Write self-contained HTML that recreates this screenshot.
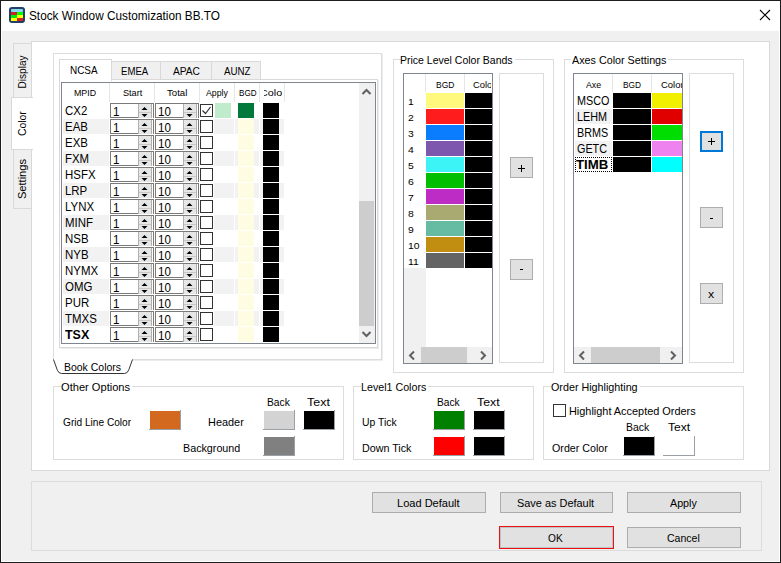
<!DOCTYPE html><html><head><meta charset="utf-8"><style>
html,body{margin:0;padding:0;}
body{width:781px;height:563px;position:relative;overflow:hidden;background:#f0f0f0;font-family:"Liberation Sans",sans-serif;}
.a{position:absolute;box-sizing:border-box;}
.t{position:absolute;white-space:nowrap;}
</style></head><body>
<div class="a" style="left:0px;top:0px;width:781px;height:563px;border:1px solid #1c1c1c;background:#f0f0f0;"></div>
<div class="a" style="left:1px;top:1px;width:779px;height:561px;border:1px solid #ffffff;"></div>
<div class="a" style="left:1px;top:1px;width:779px;height:30px;background:#ffffff;"></div>
<svg class="a" style="left:9px;top:7px" width="16" height="16" viewBox="0 0 16 16">
<rect x="0" y="0" width="16" height="16" rx="3" fill="#213f68"/>
<rect x="2" y="2" width="12" height="3" rx="1" fill="#8ad6ee"/>
<rect x="2" y="5" width="6" height="3" fill="#d42020"/><rect x="8" y="5" width="6" height="3" fill="#00ff00"/>
<rect x="2" y="8" width="6" height="3" fill="#00ee00"/><rect x="8" y="8" width="6" height="3" fill="#ffff00"/>
<rect x="2" y="11" width="6" height="3" fill="#ffff00"/><rect x="8" y="11" width="6" height="3" fill="#d42020"/>
</svg>
<div class="t" style="left:29.47px;top:10.13px;font-size:12.6px;line-height:12.6px;color:#000;font-weight:400;transform:scaleX(0.9357);transform-origin:0 0;">Stock Window Customization BB.TO</div>
<svg class="a" style="left:759px;top:9px" width="12" height="12" viewBox="0 0 12 12">
<path d="M1 1L11 11M11 1L1 11" stroke="#000" stroke-width="1.1" fill="none"/></svg>
<div class="a" style="left:13px;top:43px;width:19px;height:55px;border:1px solid #d9d9d9;background:#f0f0f0;"></div>
<div class="a" style="left:13px;top:149px;width:19px;height:60px;border:1px solid #d9d9d9;background:#f0f0f0;"></div>
<div class="a" style="left:31px;top:41px;width:739px;height:430px;border:1px solid #d9d9d9;background:#ffffff;"></div>
<div class="a" style="left:11px;top:97px;width:22px;height:53px;border:1px solid #d9d9d9;background:#ffffff;border-right:none;"></div>
<div class="t" style="left:0px;top:0px;font-size:11px;line-height:11px;transform-origin:0 0;transform:translate(18.60px,88.41px) rotate(-90deg) scaleX(0.9148) translateY(-1.34px);">Display</div>
<div class="t" style="left:0px;top:0px;font-size:11px;line-height:11px;transform-origin:0 0;transform:translate(18.40px,136.12px) rotate(-90deg) scaleX(0.9483) translateY(-1.34px);">Color</div>
<div class="t" style="left:0px;top:0px;font-size:11px;line-height:11px;transform-origin:0 0;transform:translate(18.40px,199.10px) rotate(-90deg) scaleX(1.0081) translateY(-1.34px);">Settings</div>
<div class="a" style="left:53px;top:53px;width:329px;height:307px;border:1px solid #dcdcdc;"></div>
<div class="a" style="left:382px;top:54px;width:1px;height:307px;background:#ededed;"></div>
<div class="a" style="left:133px;top:360px;width:250px;height:1px;background:#ededed;"></div>
<div class="a" style="left:54px;top:355px;width:78px;height:5px;background:#ffffff;"></div>
<svg class="a" style="left:50px;top:355px" width="90" height="22" viewBox="0 0 90 22">
<path d="M3.5 4.5 L7.2 14.8 Q8.5 18.5 11.5 18.5 L74.5 18.5 Q77.5 18.5 78.8 14.8 L82.5 4.5" fill="#ffffff" stroke="#333" stroke-width="1"/>
</svg>
<div class="t" style="left:63.66px;top:362.36px;font-size:10.8px;line-height:10.8px;color:#000;font-weight:400;transform:scaleX(0.9694);transform-origin:0 0;">Book Colors</div>
<div class="a" style="left:111px;top:61px;width:50px;height:19px;border:1px solid #d9d9d9;background:#f0f0f0;"></div>
<div class="a" style="left:160px;top:61px;width:52px;height:19px;border:1px solid #d9d9d9;background:#f0f0f0;"></div>
<div class="a" style="left:211px;top:61px;width:50px;height:19px;border:1px solid #d9d9d9;background:#f0f0f0;"></div>
<div class="a" style="left:59px;top:79px;width:319px;height:269px;border:1px solid #d9d9d9;background:#ffffff;"></div>
<div class="a" style="left:378px;top:80px;width:1px;height:269px;background:#ededed;"></div>
<div class="a" style="left:60px;top:348px;width:319px;height:1px;background:#ededed;"></div>
<div class="a" style="left:59px;top:59px;width:53px;height:22px;border:1px solid #d9d9d9;background:#ffffff;border-bottom:none;"></div>
<div class="t" style="left:69.60px;top:65.42px;font-size:11.2px;line-height:11.2px;color:#000;font-weight:400;transform:scaleX(0.8879);transform-origin:0 0;">NCSA</div>
<div class="t" style="left:120.83px;top:65.52px;font-size:11.2px;line-height:11.2px;color:#000;font-weight:400;transform:scaleX(0.8571);transform-origin:0 0;">EMEA</div>
<div class="t" style="left:172.70px;top:65.52px;font-size:11.2px;line-height:11.2px;color:#000;font-weight:400;transform:scaleX(0.9100);transform-origin:0 0;">APAC</div>
<div class="t" style="left:223.80px;top:65.52px;font-size:11.2px;line-height:11.2px;color:#000;font-weight:400;transform:scaleX(0.8696);transform-origin:0 0;">AUNZ</div>
<div class="a" style="left:61px;top:82px;width:315px;height:262px;border:1px solid #7f8690;background:#ffffff;"></div>
<div class="a" style="left:109px;top:83px;width:1px;height:19px;background:#e6e6e6;"></div>
<div class="a" style="left:154px;top:83px;width:1px;height:19px;background:#e6e6e6;"></div>
<div class="a" style="left:199px;top:83px;width:1px;height:19px;background:#e6e6e6;"></div>
<div class="a" style="left:234px;top:83px;width:1px;height:19px;background:#e6e6e6;"></div>
<div class="a" style="left:259px;top:83px;width:1px;height:19px;background:#e6e6e6;"></div>
<div class="a" style="left:284px;top:83px;width:1px;height:19px;background:#e6e6e6;"></div>
<div class="t" style="left:74.29px;top:89.38px;font-size:9px;line-height:9px;color:#000;font-weight:400;transform:scaleX(0.9825);transform-origin:0 0;">MPID</div>
<div class="t" style="left:122.59px;top:89.38px;font-size:9px;line-height:9px;color:#000;font-weight:400;transform:scaleX(1.0140);transform-origin:0 0;">Start</div>
<div class="t" style="left:167.21px;top:89.38px;font-size:9px;line-height:9px;color:#000;font-weight:400;transform:scaleX(1.0700);transform-origin:0 0;">Total</div>
<div class="t" style="left:206.30px;top:89.38px;font-size:9px;line-height:9px;color:#000;font-weight:400;transform:scaleX(0.9733);transform-origin:0 0;">Apply</div>
<div class="t" style="left:238.55px;top:89.38px;font-size:9px;line-height:9px;color:#000;font-weight:400;transform:scaleX(0.8987);transform-origin:0 0;">BGD</div>
<div class="a" style="left:264px;top:84px;width:18px;height:17px;overflow:hidden;"><div class="t" style="left:-4.04px;top:5.38px;font-size:9px;line-height:9px;color:#000;font-weight:400;transform:scaleX(1.1973);transform-origin:0 0;">Color</div></div>
<div class="a" style="left:62px;top:84px;width:297px;height:259px;overflow:hidden;"><div class="a" style="left:-62px;top:-84px;width:781px;height:563px;"><div class="t" style="left:65.43px;top:105.13px;font-size:12.6px;line-height:12.6px;color:#000;font-weight:400;transform:scaleX(0.9083);transform-origin:0 0;">CX2</div><div class="a" style="left:110px;top:103px;width:44px;height:15px;border:1px solid #7a7a7a;background:#ffffff;border-bottom:none;"></div><div class="a" style="left:110px;top:117px;width:28px;height:1px;background:#7a7a7a;"></div><div class="a" style="left:138px;top:104px;width:14px;height:14px;background:#e6e6e6;"></div><div class="a" style="left:138px;top:104px;width:1px;height:14px;background:#b0b0b0;"></div><div class="a" style="left:151px;top:104px;width:1px;height:14px;background:#b0b0b0;"></div><div class="a" style="left:139px;top:112px;width:12px;height:1px;background:#c8c8c8;"></div><svg class="a" style="left:139px;top:104px" width="12" height="14" viewBox="0 0 12 14"><path d="M2.5 6L5.5 3L8.5 6Z M2.5 10L5.5 13L8.5 10Z" fill="#000"/></svg><div class="t" style="left:113.13px;top:105.70px;font-size:12.4px;line-height:12.4px;color:#000;font-weight:400;transform:scaleX(0.9355);transform-origin:0 0;">1</div><div class="a" style="left:155px;top:103px;width:44px;height:15px;border:1px solid #7a7a7a;background:#ffffff;border-bottom:none;"></div><div class="a" style="left:155px;top:117px;width:28px;height:1px;background:#7a7a7a;"></div><div class="a" style="left:183px;top:104px;width:14px;height:14px;background:#e6e6e6;"></div><div class="a" style="left:183px;top:104px;width:1px;height:14px;background:#b0b0b0;"></div><div class="a" style="left:196px;top:104px;width:1px;height:14px;background:#b0b0b0;"></div><div class="a" style="left:184px;top:112px;width:12px;height:1px;background:#c8c8c8;"></div><svg class="a" style="left:184px;top:104px" width="12" height="14" viewBox="0 0 12 14"><path d="M2.5 6L5.5 3L8.5 6Z M2.5 10L5.5 13L8.5 10Z" fill="#000"/></svg><div class="t" style="left:158.13px;top:105.70px;font-size:12.4px;line-height:12.4px;color:#000;font-weight:400;transform:scaleX(0.9355);transform-origin:0 0;">10</div><div class="a" style="left:200px;top:104px;width:13px;height:13px;border:1px solid #333333;background:#ffffff;"></div><svg class="a" style="left:201px;top:105px" width="11" height="11" viewBox="0 0 11 11"><path d="M1.5 5.5L4.5 8.5L9.5 2" stroke="#333" stroke-width="1.2" fill="none"/></svg><div class="a" style="left:215px;top:103px;width:16px;height:15px;background:#c1ebcd;"></div><div class="a" style="left:238px;top:103px;width:16px;height:15px;background:#007a3b;"></div><div class="a" style="left:263px;top:103px;width:16px;height:15px;background:#000000;"></div><div class="a" style="left:63px;top:119px;width:46px;height:15px;background:#f2f2f2;"></div><div class="a" style="left:214px;top:119px;width:20px;height:15px;background:#f2f2f2;"></div><div class="a" style="left:235px;top:119px;width:24px;height:15px;background:#f2f2f2;"></div><div class="a" style="left:260px;top:119px;width:24px;height:15px;background:#f2f2f2;"></div><div class="t" style="left:65.43px;top:121.13px;font-size:12.6px;line-height:12.6px;color:#000;font-weight:400;transform:scaleX(0.9083);transform-origin:0 0;">EAB</div><div class="a" style="left:110px;top:119px;width:44px;height:15px;border:1px solid #7a7a7a;background:#ffffff;border-bottom:none;"></div><div class="a" style="left:110px;top:133px;width:28px;height:1px;background:#7a7a7a;"></div><div class="a" style="left:138px;top:120px;width:14px;height:14px;background:#e6e6e6;"></div><div class="a" style="left:138px;top:120px;width:1px;height:14px;background:#b0b0b0;"></div><div class="a" style="left:151px;top:120px;width:1px;height:14px;background:#b0b0b0;"></div><div class="a" style="left:139px;top:128px;width:12px;height:1px;background:#c8c8c8;"></div><svg class="a" style="left:139px;top:120px" width="12" height="14" viewBox="0 0 12 14"><path d="M2.5 6L5.5 3L8.5 6Z M2.5 10L5.5 13L8.5 10Z" fill="#000"/></svg><div class="t" style="left:113.13px;top:121.70px;font-size:12.4px;line-height:12.4px;color:#000;font-weight:400;transform:scaleX(0.9355);transform-origin:0 0;">1</div><div class="a" style="left:155px;top:119px;width:44px;height:15px;border:1px solid #7a7a7a;background:#ffffff;border-bottom:none;"></div><div class="a" style="left:155px;top:133px;width:28px;height:1px;background:#7a7a7a;"></div><div class="a" style="left:183px;top:120px;width:14px;height:14px;background:#e6e6e6;"></div><div class="a" style="left:183px;top:120px;width:1px;height:14px;background:#b0b0b0;"></div><div class="a" style="left:196px;top:120px;width:1px;height:14px;background:#b0b0b0;"></div><div class="a" style="left:184px;top:128px;width:12px;height:1px;background:#c8c8c8;"></div><svg class="a" style="left:184px;top:120px" width="12" height="14" viewBox="0 0 12 14"><path d="M2.5 6L5.5 3L8.5 6Z M2.5 10L5.5 13L8.5 10Z" fill="#000"/></svg><div class="t" style="left:158.13px;top:121.70px;font-size:12.4px;line-height:12.4px;color:#000;font-weight:400;transform:scaleX(0.9355);transform-origin:0 0;">10</div><div class="a" style="left:200px;top:120px;width:13px;height:13px;border:1px solid #333333;background:#ffffff;"></div><div class="a" style="left:238px;top:119px;width:16px;height:15px;background:#fffde1;"></div><div class="a" style="left:263px;top:119px;width:16px;height:15px;background:#000000;"></div><div class="t" style="left:65.43px;top:137.13px;font-size:12.6px;line-height:12.6px;color:#000;font-weight:400;transform:scaleX(0.9083);transform-origin:0 0;">EXB</div><div class="a" style="left:110px;top:135px;width:44px;height:15px;border:1px solid #7a7a7a;background:#ffffff;border-bottom:none;"></div><div class="a" style="left:110px;top:149px;width:28px;height:1px;background:#7a7a7a;"></div><div class="a" style="left:138px;top:136px;width:14px;height:14px;background:#e6e6e6;"></div><div class="a" style="left:138px;top:136px;width:1px;height:14px;background:#b0b0b0;"></div><div class="a" style="left:151px;top:136px;width:1px;height:14px;background:#b0b0b0;"></div><div class="a" style="left:139px;top:144px;width:12px;height:1px;background:#c8c8c8;"></div><svg class="a" style="left:139px;top:136px" width="12" height="14" viewBox="0 0 12 14"><path d="M2.5 6L5.5 3L8.5 6Z M2.5 10L5.5 13L8.5 10Z" fill="#000"/></svg><div class="t" style="left:113.13px;top:137.70px;font-size:12.4px;line-height:12.4px;color:#000;font-weight:400;transform:scaleX(0.9355);transform-origin:0 0;">1</div><div class="a" style="left:155px;top:135px;width:44px;height:15px;border:1px solid #7a7a7a;background:#ffffff;border-bottom:none;"></div><div class="a" style="left:155px;top:149px;width:28px;height:1px;background:#7a7a7a;"></div><div class="a" style="left:183px;top:136px;width:14px;height:14px;background:#e6e6e6;"></div><div class="a" style="left:183px;top:136px;width:1px;height:14px;background:#b0b0b0;"></div><div class="a" style="left:196px;top:136px;width:1px;height:14px;background:#b0b0b0;"></div><div class="a" style="left:184px;top:144px;width:12px;height:1px;background:#c8c8c8;"></div><svg class="a" style="left:184px;top:136px" width="12" height="14" viewBox="0 0 12 14"><path d="M2.5 6L5.5 3L8.5 6Z M2.5 10L5.5 13L8.5 10Z" fill="#000"/></svg><div class="t" style="left:158.13px;top:137.70px;font-size:12.4px;line-height:12.4px;color:#000;font-weight:400;transform:scaleX(0.9355);transform-origin:0 0;">10</div><div class="a" style="left:200px;top:136px;width:13px;height:13px;border:1px solid #333333;background:#ffffff;"></div><div class="a" style="left:238px;top:135px;width:16px;height:15px;background:#fffde1;"></div><div class="a" style="left:263px;top:135px;width:16px;height:15px;background:#000000;"></div><div class="a" style="left:63px;top:151px;width:46px;height:15px;background:#f2f2f2;"></div><div class="a" style="left:214px;top:151px;width:20px;height:15px;background:#f2f2f2;"></div><div class="a" style="left:235px;top:151px;width:24px;height:15px;background:#f2f2f2;"></div><div class="a" style="left:260px;top:151px;width:24px;height:15px;background:#f2f2f2;"></div><div class="t" style="left:65.43px;top:153.13px;font-size:12.6px;line-height:12.6px;color:#000;font-weight:400;transform:scaleX(0.9083);transform-origin:0 0;">FXM</div><div class="a" style="left:110px;top:151px;width:44px;height:15px;border:1px solid #7a7a7a;background:#ffffff;border-bottom:none;"></div><div class="a" style="left:110px;top:165px;width:28px;height:1px;background:#7a7a7a;"></div><div class="a" style="left:138px;top:152px;width:14px;height:14px;background:#e6e6e6;"></div><div class="a" style="left:138px;top:152px;width:1px;height:14px;background:#b0b0b0;"></div><div class="a" style="left:151px;top:152px;width:1px;height:14px;background:#b0b0b0;"></div><div class="a" style="left:139px;top:160px;width:12px;height:1px;background:#c8c8c8;"></div><svg class="a" style="left:139px;top:152px" width="12" height="14" viewBox="0 0 12 14"><path d="M2.5 6L5.5 3L8.5 6Z M2.5 10L5.5 13L8.5 10Z" fill="#000"/></svg><div class="t" style="left:113.13px;top:153.70px;font-size:12.4px;line-height:12.4px;color:#000;font-weight:400;transform:scaleX(0.9355);transform-origin:0 0;">1</div><div class="a" style="left:155px;top:151px;width:44px;height:15px;border:1px solid #7a7a7a;background:#ffffff;border-bottom:none;"></div><div class="a" style="left:155px;top:165px;width:28px;height:1px;background:#7a7a7a;"></div><div class="a" style="left:183px;top:152px;width:14px;height:14px;background:#e6e6e6;"></div><div class="a" style="left:183px;top:152px;width:1px;height:14px;background:#b0b0b0;"></div><div class="a" style="left:196px;top:152px;width:1px;height:14px;background:#b0b0b0;"></div><div class="a" style="left:184px;top:160px;width:12px;height:1px;background:#c8c8c8;"></div><svg class="a" style="left:184px;top:152px" width="12" height="14" viewBox="0 0 12 14"><path d="M2.5 6L5.5 3L8.5 6Z M2.5 10L5.5 13L8.5 10Z" fill="#000"/></svg><div class="t" style="left:158.13px;top:153.70px;font-size:12.4px;line-height:12.4px;color:#000;font-weight:400;transform:scaleX(0.9355);transform-origin:0 0;">10</div><div class="a" style="left:200px;top:152px;width:13px;height:13px;border:1px solid #333333;background:#ffffff;"></div><div class="a" style="left:238px;top:151px;width:16px;height:15px;background:#fffde1;"></div><div class="a" style="left:263px;top:151px;width:16px;height:15px;background:#000000;"></div><div class="t" style="left:65.43px;top:169.13px;font-size:12.6px;line-height:12.6px;color:#000;font-weight:400;transform:scaleX(0.9083);transform-origin:0 0;">HSFX</div><div class="a" style="left:110px;top:167px;width:44px;height:15px;border:1px solid #7a7a7a;background:#ffffff;border-bottom:none;"></div><div class="a" style="left:110px;top:181px;width:28px;height:1px;background:#7a7a7a;"></div><div class="a" style="left:138px;top:168px;width:14px;height:14px;background:#e6e6e6;"></div><div class="a" style="left:138px;top:168px;width:1px;height:14px;background:#b0b0b0;"></div><div class="a" style="left:151px;top:168px;width:1px;height:14px;background:#b0b0b0;"></div><div class="a" style="left:139px;top:176px;width:12px;height:1px;background:#c8c8c8;"></div><svg class="a" style="left:139px;top:168px" width="12" height="14" viewBox="0 0 12 14"><path d="M2.5 6L5.5 3L8.5 6Z M2.5 10L5.5 13L8.5 10Z" fill="#000"/></svg><div class="t" style="left:113.13px;top:169.70px;font-size:12.4px;line-height:12.4px;color:#000;font-weight:400;transform:scaleX(0.9355);transform-origin:0 0;">1</div><div class="a" style="left:155px;top:167px;width:44px;height:15px;border:1px solid #7a7a7a;background:#ffffff;border-bottom:none;"></div><div class="a" style="left:155px;top:181px;width:28px;height:1px;background:#7a7a7a;"></div><div class="a" style="left:183px;top:168px;width:14px;height:14px;background:#e6e6e6;"></div><div class="a" style="left:183px;top:168px;width:1px;height:14px;background:#b0b0b0;"></div><div class="a" style="left:196px;top:168px;width:1px;height:14px;background:#b0b0b0;"></div><div class="a" style="left:184px;top:176px;width:12px;height:1px;background:#c8c8c8;"></div><svg class="a" style="left:184px;top:168px" width="12" height="14" viewBox="0 0 12 14"><path d="M2.5 6L5.5 3L8.5 6Z M2.5 10L5.5 13L8.5 10Z" fill="#000"/></svg><div class="t" style="left:158.13px;top:169.70px;font-size:12.4px;line-height:12.4px;color:#000;font-weight:400;transform:scaleX(0.9355);transform-origin:0 0;">10</div><div class="a" style="left:200px;top:168px;width:13px;height:13px;border:1px solid #333333;background:#ffffff;"></div><div class="a" style="left:238px;top:167px;width:16px;height:15px;background:#fffde1;"></div><div class="a" style="left:263px;top:167px;width:16px;height:15px;background:#000000;"></div><div class="a" style="left:63px;top:183px;width:46px;height:15px;background:#f2f2f2;"></div><div class="a" style="left:214px;top:183px;width:20px;height:15px;background:#f2f2f2;"></div><div class="a" style="left:235px;top:183px;width:24px;height:15px;background:#f2f2f2;"></div><div class="a" style="left:260px;top:183px;width:24px;height:15px;background:#f2f2f2;"></div><div class="t" style="left:65.43px;top:185.13px;font-size:12.6px;line-height:12.6px;color:#000;font-weight:400;transform:scaleX(0.9083);transform-origin:0 0;">LRP</div><div class="a" style="left:110px;top:183px;width:44px;height:15px;border:1px solid #7a7a7a;background:#ffffff;border-bottom:none;"></div><div class="a" style="left:110px;top:197px;width:28px;height:1px;background:#7a7a7a;"></div><div class="a" style="left:138px;top:184px;width:14px;height:14px;background:#e6e6e6;"></div><div class="a" style="left:138px;top:184px;width:1px;height:14px;background:#b0b0b0;"></div><div class="a" style="left:151px;top:184px;width:1px;height:14px;background:#b0b0b0;"></div><div class="a" style="left:139px;top:192px;width:12px;height:1px;background:#c8c8c8;"></div><svg class="a" style="left:139px;top:184px" width="12" height="14" viewBox="0 0 12 14"><path d="M2.5 6L5.5 3L8.5 6Z M2.5 10L5.5 13L8.5 10Z" fill="#000"/></svg><div class="t" style="left:113.13px;top:185.70px;font-size:12.4px;line-height:12.4px;color:#000;font-weight:400;transform:scaleX(0.9355);transform-origin:0 0;">1</div><div class="a" style="left:155px;top:183px;width:44px;height:15px;border:1px solid #7a7a7a;background:#ffffff;border-bottom:none;"></div><div class="a" style="left:155px;top:197px;width:28px;height:1px;background:#7a7a7a;"></div><div class="a" style="left:183px;top:184px;width:14px;height:14px;background:#e6e6e6;"></div><div class="a" style="left:183px;top:184px;width:1px;height:14px;background:#b0b0b0;"></div><div class="a" style="left:196px;top:184px;width:1px;height:14px;background:#b0b0b0;"></div><div class="a" style="left:184px;top:192px;width:12px;height:1px;background:#c8c8c8;"></div><svg class="a" style="left:184px;top:184px" width="12" height="14" viewBox="0 0 12 14"><path d="M2.5 6L5.5 3L8.5 6Z M2.5 10L5.5 13L8.5 10Z" fill="#000"/></svg><div class="t" style="left:158.13px;top:185.70px;font-size:12.4px;line-height:12.4px;color:#000;font-weight:400;transform:scaleX(0.9355);transform-origin:0 0;">10</div><div class="a" style="left:200px;top:184px;width:13px;height:13px;border:1px solid #333333;background:#ffffff;"></div><div class="a" style="left:238px;top:183px;width:16px;height:15px;background:#fffde1;"></div><div class="a" style="left:263px;top:183px;width:16px;height:15px;background:#000000;"></div><div class="t" style="left:65.43px;top:201.13px;font-size:12.6px;line-height:12.6px;color:#000;font-weight:400;transform:scaleX(0.9083);transform-origin:0 0;">LYNX</div><div class="a" style="left:110px;top:199px;width:44px;height:15px;border:1px solid #7a7a7a;background:#ffffff;border-bottom:none;"></div><div class="a" style="left:110px;top:213px;width:28px;height:1px;background:#7a7a7a;"></div><div class="a" style="left:138px;top:200px;width:14px;height:14px;background:#e6e6e6;"></div><div class="a" style="left:138px;top:200px;width:1px;height:14px;background:#b0b0b0;"></div><div class="a" style="left:151px;top:200px;width:1px;height:14px;background:#b0b0b0;"></div><div class="a" style="left:139px;top:208px;width:12px;height:1px;background:#c8c8c8;"></div><svg class="a" style="left:139px;top:200px" width="12" height="14" viewBox="0 0 12 14"><path d="M2.5 6L5.5 3L8.5 6Z M2.5 10L5.5 13L8.5 10Z" fill="#000"/></svg><div class="t" style="left:113.13px;top:201.70px;font-size:12.4px;line-height:12.4px;color:#000;font-weight:400;transform:scaleX(0.9355);transform-origin:0 0;">1</div><div class="a" style="left:155px;top:199px;width:44px;height:15px;border:1px solid #7a7a7a;background:#ffffff;border-bottom:none;"></div><div class="a" style="left:155px;top:213px;width:28px;height:1px;background:#7a7a7a;"></div><div class="a" style="left:183px;top:200px;width:14px;height:14px;background:#e6e6e6;"></div><div class="a" style="left:183px;top:200px;width:1px;height:14px;background:#b0b0b0;"></div><div class="a" style="left:196px;top:200px;width:1px;height:14px;background:#b0b0b0;"></div><div class="a" style="left:184px;top:208px;width:12px;height:1px;background:#c8c8c8;"></div><svg class="a" style="left:184px;top:200px" width="12" height="14" viewBox="0 0 12 14"><path d="M2.5 6L5.5 3L8.5 6Z M2.5 10L5.5 13L8.5 10Z" fill="#000"/></svg><div class="t" style="left:158.13px;top:201.70px;font-size:12.4px;line-height:12.4px;color:#000;font-weight:400;transform:scaleX(0.9355);transform-origin:0 0;">10</div><div class="a" style="left:200px;top:200px;width:13px;height:13px;border:1px solid #333333;background:#ffffff;"></div><div class="a" style="left:238px;top:199px;width:16px;height:15px;background:#fffde1;"></div><div class="a" style="left:263px;top:199px;width:16px;height:15px;background:#000000;"></div><div class="a" style="left:63px;top:215px;width:46px;height:15px;background:#f2f2f2;"></div><div class="a" style="left:214px;top:215px;width:20px;height:15px;background:#f2f2f2;"></div><div class="a" style="left:235px;top:215px;width:24px;height:15px;background:#f2f2f2;"></div><div class="a" style="left:260px;top:215px;width:24px;height:15px;background:#f2f2f2;"></div><div class="t" style="left:65.43px;top:217.13px;font-size:12.6px;line-height:12.6px;color:#000;font-weight:400;transform:scaleX(0.9083);transform-origin:0 0;">MINF</div><div class="a" style="left:110px;top:215px;width:44px;height:15px;border:1px solid #7a7a7a;background:#ffffff;border-bottom:none;"></div><div class="a" style="left:110px;top:229px;width:28px;height:1px;background:#7a7a7a;"></div><div class="a" style="left:138px;top:216px;width:14px;height:14px;background:#e6e6e6;"></div><div class="a" style="left:138px;top:216px;width:1px;height:14px;background:#b0b0b0;"></div><div class="a" style="left:151px;top:216px;width:1px;height:14px;background:#b0b0b0;"></div><div class="a" style="left:139px;top:224px;width:12px;height:1px;background:#c8c8c8;"></div><svg class="a" style="left:139px;top:216px" width="12" height="14" viewBox="0 0 12 14"><path d="M2.5 6L5.5 3L8.5 6Z M2.5 10L5.5 13L8.5 10Z" fill="#000"/></svg><div class="t" style="left:113.13px;top:217.70px;font-size:12.4px;line-height:12.4px;color:#000;font-weight:400;transform:scaleX(0.9355);transform-origin:0 0;">1</div><div class="a" style="left:155px;top:215px;width:44px;height:15px;border:1px solid #7a7a7a;background:#ffffff;border-bottom:none;"></div><div class="a" style="left:155px;top:229px;width:28px;height:1px;background:#7a7a7a;"></div><div class="a" style="left:183px;top:216px;width:14px;height:14px;background:#e6e6e6;"></div><div class="a" style="left:183px;top:216px;width:1px;height:14px;background:#b0b0b0;"></div><div class="a" style="left:196px;top:216px;width:1px;height:14px;background:#b0b0b0;"></div><div class="a" style="left:184px;top:224px;width:12px;height:1px;background:#c8c8c8;"></div><svg class="a" style="left:184px;top:216px" width="12" height="14" viewBox="0 0 12 14"><path d="M2.5 6L5.5 3L8.5 6Z M2.5 10L5.5 13L8.5 10Z" fill="#000"/></svg><div class="t" style="left:158.13px;top:217.70px;font-size:12.4px;line-height:12.4px;color:#000;font-weight:400;transform:scaleX(0.9355);transform-origin:0 0;">10</div><div class="a" style="left:200px;top:216px;width:13px;height:13px;border:1px solid #333333;background:#ffffff;"></div><div class="a" style="left:238px;top:215px;width:16px;height:15px;background:#fffde1;"></div><div class="a" style="left:263px;top:215px;width:16px;height:15px;background:#000000;"></div><div class="t" style="left:65.43px;top:233.13px;font-size:12.6px;line-height:12.6px;color:#000;font-weight:400;transform:scaleX(0.9083);transform-origin:0 0;">NSB</div><div class="a" style="left:110px;top:231px;width:44px;height:15px;border:1px solid #7a7a7a;background:#ffffff;border-bottom:none;"></div><div class="a" style="left:110px;top:245px;width:28px;height:1px;background:#7a7a7a;"></div><div class="a" style="left:138px;top:232px;width:14px;height:14px;background:#e6e6e6;"></div><div class="a" style="left:138px;top:232px;width:1px;height:14px;background:#b0b0b0;"></div><div class="a" style="left:151px;top:232px;width:1px;height:14px;background:#b0b0b0;"></div><div class="a" style="left:139px;top:240px;width:12px;height:1px;background:#c8c8c8;"></div><svg class="a" style="left:139px;top:232px" width="12" height="14" viewBox="0 0 12 14"><path d="M2.5 6L5.5 3L8.5 6Z M2.5 10L5.5 13L8.5 10Z" fill="#000"/></svg><div class="t" style="left:113.13px;top:233.70px;font-size:12.4px;line-height:12.4px;color:#000;font-weight:400;transform:scaleX(0.9355);transform-origin:0 0;">1</div><div class="a" style="left:155px;top:231px;width:44px;height:15px;border:1px solid #7a7a7a;background:#ffffff;border-bottom:none;"></div><div class="a" style="left:155px;top:245px;width:28px;height:1px;background:#7a7a7a;"></div><div class="a" style="left:183px;top:232px;width:14px;height:14px;background:#e6e6e6;"></div><div class="a" style="left:183px;top:232px;width:1px;height:14px;background:#b0b0b0;"></div><div class="a" style="left:196px;top:232px;width:1px;height:14px;background:#b0b0b0;"></div><div class="a" style="left:184px;top:240px;width:12px;height:1px;background:#c8c8c8;"></div><svg class="a" style="left:184px;top:232px" width="12" height="14" viewBox="0 0 12 14"><path d="M2.5 6L5.5 3L8.5 6Z M2.5 10L5.5 13L8.5 10Z" fill="#000"/></svg><div class="t" style="left:158.13px;top:233.70px;font-size:12.4px;line-height:12.4px;color:#000;font-weight:400;transform:scaleX(0.9355);transform-origin:0 0;">10</div><div class="a" style="left:200px;top:232px;width:13px;height:13px;border:1px solid #333333;background:#ffffff;"></div><div class="a" style="left:238px;top:231px;width:16px;height:15px;background:#fffde1;"></div><div class="a" style="left:263px;top:231px;width:16px;height:15px;background:#000000;"></div><div class="a" style="left:63px;top:247px;width:46px;height:15px;background:#f2f2f2;"></div><div class="a" style="left:214px;top:247px;width:20px;height:15px;background:#f2f2f2;"></div><div class="a" style="left:235px;top:247px;width:24px;height:15px;background:#f2f2f2;"></div><div class="a" style="left:260px;top:247px;width:24px;height:15px;background:#f2f2f2;"></div><div class="t" style="left:65.43px;top:249.13px;font-size:12.6px;line-height:12.6px;color:#000;font-weight:400;transform:scaleX(0.9083);transform-origin:0 0;">NYB</div><div class="a" style="left:110px;top:247px;width:44px;height:15px;border:1px solid #7a7a7a;background:#ffffff;border-bottom:none;"></div><div class="a" style="left:110px;top:261px;width:28px;height:1px;background:#7a7a7a;"></div><div class="a" style="left:138px;top:248px;width:14px;height:14px;background:#e6e6e6;"></div><div class="a" style="left:138px;top:248px;width:1px;height:14px;background:#b0b0b0;"></div><div class="a" style="left:151px;top:248px;width:1px;height:14px;background:#b0b0b0;"></div><div class="a" style="left:139px;top:256px;width:12px;height:1px;background:#c8c8c8;"></div><svg class="a" style="left:139px;top:248px" width="12" height="14" viewBox="0 0 12 14"><path d="M2.5 6L5.5 3L8.5 6Z M2.5 10L5.5 13L8.5 10Z" fill="#000"/></svg><div class="t" style="left:113.13px;top:249.70px;font-size:12.4px;line-height:12.4px;color:#000;font-weight:400;transform:scaleX(0.9355);transform-origin:0 0;">1</div><div class="a" style="left:155px;top:247px;width:44px;height:15px;border:1px solid #7a7a7a;background:#ffffff;border-bottom:none;"></div><div class="a" style="left:155px;top:261px;width:28px;height:1px;background:#7a7a7a;"></div><div class="a" style="left:183px;top:248px;width:14px;height:14px;background:#e6e6e6;"></div><div class="a" style="left:183px;top:248px;width:1px;height:14px;background:#b0b0b0;"></div><div class="a" style="left:196px;top:248px;width:1px;height:14px;background:#b0b0b0;"></div><div class="a" style="left:184px;top:256px;width:12px;height:1px;background:#c8c8c8;"></div><svg class="a" style="left:184px;top:248px" width="12" height="14" viewBox="0 0 12 14"><path d="M2.5 6L5.5 3L8.5 6Z M2.5 10L5.5 13L8.5 10Z" fill="#000"/></svg><div class="t" style="left:158.13px;top:249.70px;font-size:12.4px;line-height:12.4px;color:#000;font-weight:400;transform:scaleX(0.9355);transform-origin:0 0;">10</div><div class="a" style="left:200px;top:248px;width:13px;height:13px;border:1px solid #333333;background:#ffffff;"></div><div class="a" style="left:238px;top:247px;width:16px;height:15px;background:#fffde1;"></div><div class="a" style="left:263px;top:247px;width:16px;height:15px;background:#000000;"></div><div class="t" style="left:65.43px;top:265.13px;font-size:12.6px;line-height:12.6px;color:#000;font-weight:400;transform:scaleX(0.9083);transform-origin:0 0;">NYMX</div><div class="a" style="left:110px;top:263px;width:44px;height:15px;border:1px solid #7a7a7a;background:#ffffff;border-bottom:none;"></div><div class="a" style="left:110px;top:277px;width:28px;height:1px;background:#7a7a7a;"></div><div class="a" style="left:138px;top:264px;width:14px;height:14px;background:#e6e6e6;"></div><div class="a" style="left:138px;top:264px;width:1px;height:14px;background:#b0b0b0;"></div><div class="a" style="left:151px;top:264px;width:1px;height:14px;background:#b0b0b0;"></div><div class="a" style="left:139px;top:272px;width:12px;height:1px;background:#c8c8c8;"></div><svg class="a" style="left:139px;top:264px" width="12" height="14" viewBox="0 0 12 14"><path d="M2.5 6L5.5 3L8.5 6Z M2.5 10L5.5 13L8.5 10Z" fill="#000"/></svg><div class="t" style="left:113.13px;top:265.70px;font-size:12.4px;line-height:12.4px;color:#000;font-weight:400;transform:scaleX(0.9355);transform-origin:0 0;">1</div><div class="a" style="left:155px;top:263px;width:44px;height:15px;border:1px solid #7a7a7a;background:#ffffff;border-bottom:none;"></div><div class="a" style="left:155px;top:277px;width:28px;height:1px;background:#7a7a7a;"></div><div class="a" style="left:183px;top:264px;width:14px;height:14px;background:#e6e6e6;"></div><div class="a" style="left:183px;top:264px;width:1px;height:14px;background:#b0b0b0;"></div><div class="a" style="left:196px;top:264px;width:1px;height:14px;background:#b0b0b0;"></div><div class="a" style="left:184px;top:272px;width:12px;height:1px;background:#c8c8c8;"></div><svg class="a" style="left:184px;top:264px" width="12" height="14" viewBox="0 0 12 14"><path d="M2.5 6L5.5 3L8.5 6Z M2.5 10L5.5 13L8.5 10Z" fill="#000"/></svg><div class="t" style="left:158.13px;top:265.70px;font-size:12.4px;line-height:12.4px;color:#000;font-weight:400;transform:scaleX(0.9355);transform-origin:0 0;">10</div><div class="a" style="left:200px;top:264px;width:13px;height:13px;border:1px solid #333333;background:#ffffff;"></div><div class="a" style="left:238px;top:263px;width:16px;height:15px;background:#fffde1;"></div><div class="a" style="left:263px;top:263px;width:16px;height:15px;background:#000000;"></div><div class="a" style="left:63px;top:279px;width:46px;height:15px;background:#f2f2f2;"></div><div class="a" style="left:214px;top:279px;width:20px;height:15px;background:#f2f2f2;"></div><div class="a" style="left:235px;top:279px;width:24px;height:15px;background:#f2f2f2;"></div><div class="a" style="left:260px;top:279px;width:24px;height:15px;background:#f2f2f2;"></div><div class="t" style="left:65.43px;top:281.13px;font-size:12.6px;line-height:12.6px;color:#000;font-weight:400;transform:scaleX(0.9083);transform-origin:0 0;">OMG</div><div class="a" style="left:110px;top:279px;width:44px;height:15px;border:1px solid #7a7a7a;background:#ffffff;border-bottom:none;"></div><div class="a" style="left:110px;top:293px;width:28px;height:1px;background:#7a7a7a;"></div><div class="a" style="left:138px;top:280px;width:14px;height:14px;background:#e6e6e6;"></div><div class="a" style="left:138px;top:280px;width:1px;height:14px;background:#b0b0b0;"></div><div class="a" style="left:151px;top:280px;width:1px;height:14px;background:#b0b0b0;"></div><div class="a" style="left:139px;top:288px;width:12px;height:1px;background:#c8c8c8;"></div><svg class="a" style="left:139px;top:280px" width="12" height="14" viewBox="0 0 12 14"><path d="M2.5 6L5.5 3L8.5 6Z M2.5 10L5.5 13L8.5 10Z" fill="#000"/></svg><div class="t" style="left:113.13px;top:281.70px;font-size:12.4px;line-height:12.4px;color:#000;font-weight:400;transform:scaleX(0.9355);transform-origin:0 0;">1</div><div class="a" style="left:155px;top:279px;width:44px;height:15px;border:1px solid #7a7a7a;background:#ffffff;border-bottom:none;"></div><div class="a" style="left:155px;top:293px;width:28px;height:1px;background:#7a7a7a;"></div><div class="a" style="left:183px;top:280px;width:14px;height:14px;background:#e6e6e6;"></div><div class="a" style="left:183px;top:280px;width:1px;height:14px;background:#b0b0b0;"></div><div class="a" style="left:196px;top:280px;width:1px;height:14px;background:#b0b0b0;"></div><div class="a" style="left:184px;top:288px;width:12px;height:1px;background:#c8c8c8;"></div><svg class="a" style="left:184px;top:280px" width="12" height="14" viewBox="0 0 12 14"><path d="M2.5 6L5.5 3L8.5 6Z M2.5 10L5.5 13L8.5 10Z" fill="#000"/></svg><div class="t" style="left:158.13px;top:281.70px;font-size:12.4px;line-height:12.4px;color:#000;font-weight:400;transform:scaleX(0.9355);transform-origin:0 0;">10</div><div class="a" style="left:200px;top:280px;width:13px;height:13px;border:1px solid #333333;background:#ffffff;"></div><div class="a" style="left:238px;top:279px;width:16px;height:15px;background:#fffde1;"></div><div class="a" style="left:263px;top:279px;width:16px;height:15px;background:#000000;"></div><div class="t" style="left:65.43px;top:297.13px;font-size:12.6px;line-height:12.6px;color:#000;font-weight:400;transform:scaleX(0.9083);transform-origin:0 0;">PUR</div><div class="a" style="left:110px;top:295px;width:44px;height:15px;border:1px solid #7a7a7a;background:#ffffff;border-bottom:none;"></div><div class="a" style="left:110px;top:309px;width:28px;height:1px;background:#7a7a7a;"></div><div class="a" style="left:138px;top:296px;width:14px;height:14px;background:#e6e6e6;"></div><div class="a" style="left:138px;top:296px;width:1px;height:14px;background:#b0b0b0;"></div><div class="a" style="left:151px;top:296px;width:1px;height:14px;background:#b0b0b0;"></div><div class="a" style="left:139px;top:304px;width:12px;height:1px;background:#c8c8c8;"></div><svg class="a" style="left:139px;top:296px" width="12" height="14" viewBox="0 0 12 14"><path d="M2.5 6L5.5 3L8.5 6Z M2.5 10L5.5 13L8.5 10Z" fill="#000"/></svg><div class="t" style="left:113.13px;top:297.70px;font-size:12.4px;line-height:12.4px;color:#000;font-weight:400;transform:scaleX(0.9355);transform-origin:0 0;">1</div><div class="a" style="left:155px;top:295px;width:44px;height:15px;border:1px solid #7a7a7a;background:#ffffff;border-bottom:none;"></div><div class="a" style="left:155px;top:309px;width:28px;height:1px;background:#7a7a7a;"></div><div class="a" style="left:183px;top:296px;width:14px;height:14px;background:#e6e6e6;"></div><div class="a" style="left:183px;top:296px;width:1px;height:14px;background:#b0b0b0;"></div><div class="a" style="left:196px;top:296px;width:1px;height:14px;background:#b0b0b0;"></div><div class="a" style="left:184px;top:304px;width:12px;height:1px;background:#c8c8c8;"></div><svg class="a" style="left:184px;top:296px" width="12" height="14" viewBox="0 0 12 14"><path d="M2.5 6L5.5 3L8.5 6Z M2.5 10L5.5 13L8.5 10Z" fill="#000"/></svg><div class="t" style="left:158.13px;top:297.70px;font-size:12.4px;line-height:12.4px;color:#000;font-weight:400;transform:scaleX(0.9355);transform-origin:0 0;">10</div><div class="a" style="left:200px;top:296px;width:13px;height:13px;border:1px solid #333333;background:#ffffff;"></div><div class="a" style="left:238px;top:295px;width:16px;height:15px;background:#fffde1;"></div><div class="a" style="left:263px;top:295px;width:16px;height:15px;background:#000000;"></div><div class="a" style="left:63px;top:311px;width:46px;height:15px;background:#f2f2f2;"></div><div class="a" style="left:214px;top:311px;width:20px;height:15px;background:#f2f2f2;"></div><div class="a" style="left:235px;top:311px;width:24px;height:15px;background:#f2f2f2;"></div><div class="a" style="left:260px;top:311px;width:24px;height:15px;background:#f2f2f2;"></div><div class="t" style="left:65.43px;top:313.13px;font-size:12.6px;line-height:12.6px;color:#000;font-weight:400;transform:scaleX(0.9083);transform-origin:0 0;">TMXS</div><div class="a" style="left:110px;top:311px;width:44px;height:15px;border:1px solid #7a7a7a;background:#ffffff;border-bottom:none;"></div><div class="a" style="left:110px;top:325px;width:28px;height:1px;background:#7a7a7a;"></div><div class="a" style="left:138px;top:312px;width:14px;height:14px;background:#e6e6e6;"></div><div class="a" style="left:138px;top:312px;width:1px;height:14px;background:#b0b0b0;"></div><div class="a" style="left:151px;top:312px;width:1px;height:14px;background:#b0b0b0;"></div><div class="a" style="left:139px;top:320px;width:12px;height:1px;background:#c8c8c8;"></div><svg class="a" style="left:139px;top:312px" width="12" height="14" viewBox="0 0 12 14"><path d="M2.5 6L5.5 3L8.5 6Z M2.5 10L5.5 13L8.5 10Z" fill="#000"/></svg><div class="t" style="left:113.13px;top:313.70px;font-size:12.4px;line-height:12.4px;color:#000;font-weight:400;transform:scaleX(0.9355);transform-origin:0 0;">1</div><div class="a" style="left:155px;top:311px;width:44px;height:15px;border:1px solid #7a7a7a;background:#ffffff;border-bottom:none;"></div><div class="a" style="left:155px;top:325px;width:28px;height:1px;background:#7a7a7a;"></div><div class="a" style="left:183px;top:312px;width:14px;height:14px;background:#e6e6e6;"></div><div class="a" style="left:183px;top:312px;width:1px;height:14px;background:#b0b0b0;"></div><div class="a" style="left:196px;top:312px;width:1px;height:14px;background:#b0b0b0;"></div><div class="a" style="left:184px;top:320px;width:12px;height:1px;background:#c8c8c8;"></div><svg class="a" style="left:184px;top:312px" width="12" height="14" viewBox="0 0 12 14"><path d="M2.5 6L5.5 3L8.5 6Z M2.5 10L5.5 13L8.5 10Z" fill="#000"/></svg><div class="t" style="left:158.13px;top:313.70px;font-size:12.4px;line-height:12.4px;color:#000;font-weight:400;transform:scaleX(0.9355);transform-origin:0 0;">10</div><div class="a" style="left:200px;top:312px;width:13px;height:13px;border:1px solid #333333;background:#ffffff;"></div><div class="a" style="left:238px;top:311px;width:16px;height:15px;background:#fffde1;"></div><div class="a" style="left:263px;top:311px;width:16px;height:15px;background:#000000;"></div><div class="t" style="left:64.98px;top:329.16px;font-size:12.8px;line-height:12.8px;color:#000;font-weight:700;transform:scaleX(0.9740);transform-origin:0 0;">TSX</div><div class="a" style="left:110px;top:327px;width:44px;height:15px;border:1px solid #7a7a7a;background:#ffffff;border-bottom:none;"></div><div class="a" style="left:110px;top:341px;width:28px;height:1px;background:#7a7a7a;"></div><div class="a" style="left:138px;top:328px;width:14px;height:14px;background:#e6e6e6;"></div><div class="a" style="left:138px;top:328px;width:1px;height:14px;background:#b0b0b0;"></div><div class="a" style="left:151px;top:328px;width:1px;height:14px;background:#b0b0b0;"></div><div class="a" style="left:139px;top:336px;width:12px;height:1px;background:#c8c8c8;"></div><svg class="a" style="left:139px;top:328px" width="12" height="14" viewBox="0 0 12 14"><path d="M2.5 6L5.5 3L8.5 6Z M2.5 10L5.5 13L8.5 10Z" fill="#000"/></svg><div class="t" style="left:113.13px;top:329.70px;font-size:12.4px;line-height:12.4px;color:#000;font-weight:400;transform:scaleX(0.9355);transform-origin:0 0;">1</div><div class="a" style="left:155px;top:327px;width:44px;height:15px;border:1px solid #7a7a7a;background:#ffffff;border-bottom:none;"></div><div class="a" style="left:155px;top:341px;width:28px;height:1px;background:#7a7a7a;"></div><div class="a" style="left:183px;top:328px;width:14px;height:14px;background:#e6e6e6;"></div><div class="a" style="left:183px;top:328px;width:1px;height:14px;background:#b0b0b0;"></div><div class="a" style="left:196px;top:328px;width:1px;height:14px;background:#b0b0b0;"></div><div class="a" style="left:184px;top:336px;width:12px;height:1px;background:#c8c8c8;"></div><svg class="a" style="left:184px;top:328px" width="12" height="14" viewBox="0 0 12 14"><path d="M2.5 6L5.5 3L8.5 6Z M2.5 10L5.5 13L8.5 10Z" fill="#000"/></svg><div class="t" style="left:158.13px;top:329.70px;font-size:12.4px;line-height:12.4px;color:#000;font-weight:400;transform:scaleX(0.9355);transform-origin:0 0;">10</div><div class="a" style="left:200px;top:328px;width:13px;height:13px;border:1px solid #333333;background:#ffffff;"></div><div class="a" style="left:238px;top:327px;width:16px;height:15px;background:#fffde1;"></div><div class="a" style="left:263px;top:327px;width:16px;height:15px;background:#000000;"></div></div></div>
<div class="a" style="left:359px;top:83px;width:16px;height:260px;background:#f0f0f0;"></div>
<div class="a" style="left:359px;top:201px;width:15px;height:125px;background:#cdcdcd;"></div>
<svg class="a" style="left:361px;top:87px" width="11" height="9" viewBox="0 0 11 9"><path d="M1.5 7L5.5 3L9.5 7" stroke="#606060" stroke-width="2" fill="none"/></svg>
<svg class="a" style="left:361px;top:330px" width="11" height="9" viewBox="0 0 11 9"><path d="M1.5 2L5.5 6L9.5 2" stroke="#606060" stroke-width="2" fill="none"/></svg>
<div class="a" style="left:393px;top:59px;width:161px;height:314px;border:1px solid #dcdcdc;"></div><div class="a" style="left:401px;top:59px;width:114px;height:1px;background:#ffffff;"></div><div class="t" style="left:400.26px;top:55.11px;font-size:11.8px;line-height:11.8px;color:#000;font-weight:400;transform:scaleX(0.8894);transform-origin:0 0;">Price Level Color Bands</div>
<div class="a" style="left:403px;top:73px;width:90px;height:291px;border:1px solid #7f8690;background:#ffffff;"></div>
<div class="a" style="left:425px;top:74px;width:1px;height:18px;background:#e6e6e6;"></div>
<div class="a" style="left:464px;top:74px;width:1px;height:18px;background:#e6e6e6;"></div>
<div class="t" style="left:436.32px;top:81.18px;font-size:9px;line-height:9px;color:#000;font-weight:400;transform:scaleX(0.9423);transform-origin:0 0;">BGD</div>
<div class="a" style="left:465px;top:74px;width:26px;height:18px;overflow:hidden;"><div class="t" style="left:8.33px;top:7.18px;font-size:9px;line-height:9px;color:#000;font-weight:400;transform:scaleX(1.0393);transform-origin:0 0;">Color</div></div>
<div class="a" style="left:426px;top:93px;width:38px;height:15px;background:#fffa7d;"></div>
<div class="a" style="left:465px;top:93px;width:27px;height:15px;background:#000000;"></div>
<div class="t" style="left:408.12px;top:97.07px;font-size:9.6px;line-height:9.6px;color:#000;font-weight:400;transform:scaleX(1.0833);transform-origin:0 0;">1</div>
<div class="a" style="left:426px;top:109px;width:38px;height:15px;background:#ff1c1c;"></div>
<div class="a" style="left:465px;top:109px;width:27px;height:15px;background:#000000;"></div>
<div class="t" style="left:408.12px;top:113.07px;font-size:9.6px;line-height:9.6px;color:#000;font-weight:400;transform:scaleX(1.0833);transform-origin:0 0;">2</div>
<div class="a" style="left:426px;top:125px;width:38px;height:15px;background:#0a7dff;"></div>
<div class="a" style="left:465px;top:125px;width:27px;height:15px;background:#000000;"></div>
<div class="t" style="left:408.12px;top:129.07px;font-size:9.6px;line-height:9.6px;color:#000;font-weight:400;transform:scaleX(1.0833);transform-origin:0 0;">3</div>
<div class="a" style="left:426px;top:141px;width:38px;height:15px;background:#7d56ad;"></div>
<div class="a" style="left:465px;top:141px;width:27px;height:15px;background:#000000;"></div>
<div class="t" style="left:408.12px;top:145.07px;font-size:9.6px;line-height:9.6px;color:#000;font-weight:400;transform:scaleX(1.0833);transform-origin:0 0;">4</div>
<div class="a" style="left:426px;top:157px;width:38px;height:15px;background:#3cf4f6;"></div>
<div class="a" style="left:465px;top:157px;width:27px;height:15px;background:#000000;"></div>
<div class="t" style="left:408.12px;top:161.07px;font-size:9.6px;line-height:9.6px;color:#000;font-weight:400;transform:scaleX(1.0833);transform-origin:0 0;">5</div>
<div class="a" style="left:426px;top:173px;width:38px;height:15px;background:#00be00;"></div>
<div class="a" style="left:465px;top:173px;width:27px;height:15px;background:#000000;"></div>
<div class="t" style="left:408.12px;top:177.07px;font-size:9.6px;line-height:9.6px;color:#000;font-weight:400;transform:scaleX(1.0833);transform-origin:0 0;">6</div>
<div class="a" style="left:426px;top:189px;width:38px;height:15px;background:#bd2cc4;"></div>
<div class="a" style="left:465px;top:189px;width:27px;height:15px;background:#000000;"></div>
<div class="t" style="left:408.12px;top:193.07px;font-size:9.6px;line-height:9.6px;color:#000;font-weight:400;transform:scaleX(1.0833);transform-origin:0 0;">7</div>
<div class="a" style="left:426px;top:205px;width:38px;height:15px;background:#a9aa72;"></div>
<div class="a" style="left:465px;top:205px;width:27px;height:15px;background:#000000;"></div>
<div class="t" style="left:408.12px;top:209.07px;font-size:9.6px;line-height:9.6px;color:#000;font-weight:400;transform:scaleX(1.0833);transform-origin:0 0;">8</div>
<div class="a" style="left:426px;top:221px;width:38px;height:15px;background:#66bba3;"></div>
<div class="a" style="left:465px;top:221px;width:27px;height:15px;background:#000000;"></div>
<div class="t" style="left:408.12px;top:225.07px;font-size:9.6px;line-height:9.6px;color:#000;font-weight:400;transform:scaleX(1.0833);transform-origin:0 0;">9</div>
<div class="a" style="left:426px;top:237px;width:38px;height:15px;background:#c18e12;"></div>
<div class="a" style="left:465px;top:237px;width:27px;height:15px;background:#000000;"></div>
<div class="t" style="left:408.12px;top:241.07px;font-size:9.6px;line-height:9.6px;color:#000;font-weight:400;transform:scaleX(1.0833);transform-origin:0 0;">10</div>
<div class="a" style="left:426px;top:253px;width:38px;height:15px;background:#646464;"></div>
<div class="a" style="left:465px;top:253px;width:27px;height:15px;background:#000000;"></div>
<div class="t" style="left:408.12px;top:257.07px;font-size:9.6px;line-height:9.6px;color:#000;font-weight:400;transform:scaleX(1.0833);transform-origin:0 0;">11</div>
<div class="a" style="left:404px;top:268px;width:22px;height:79px;background:#f0f0f0;"></div>
<div class="a" style="left:404px;top:347px;width:88px;height:16px;background:#f0f0f0;"></div>
<div class="a" style="left:421px;top:347px;width:46px;height:16px;background:#cdcdcd;"></div>
<svg class="a" style="left:407px;top:350px" width="10" height="11" viewBox="0 0 10 11"><path d="M7 1.5L3 5.5L7 9.5" stroke="#606060" stroke-width="2" fill="none"/></svg>
<svg class="a" style="left:478px;top:350px" width="10" height="11" viewBox="0 0 10 11"><path d="M3 1.5L7 5.5L3 9.5" stroke="#606060" stroke-width="2" fill="none"/></svg>
<div class="a" style="left:499px;top:73px;width:45px;height:290px;border:1px solid #dcdcdc;background:#ffffff;"></div>
<div class="a" style="left:510px;top:157px;width:23px;height:21px;border:1px solid #adadad;background:#e1e1e1;"></div>
<svg class="a" style="left:516px;top:163px" width="11" height="11" viewBox="0 0 11 11"><path d="M5.5 2V9M2 5.5H9" stroke="#000" stroke-width="1" fill="none"/></svg>
<div class="a" style="left:510px;top:259px;width:23px;height:21px;border:1px solid #adadad;background:#e1e1e1;"></div>
<div class="a" style="left:520px;top:269px;width:3px;height:1px;background:#000;"></div>
<div class="a" style="left:564px;top:59px;width:180px;height:314px;border:1px solid #dcdcdc;"></div><div class="a" style="left:571px;top:59px;width:97px;height:1px;background:#ffffff;"></div><div class="t" style="left:571.50px;top:55.11px;font-size:11.8px;line-height:11.8px;color:#000;font-weight:400;transform:scaleX(0.9119);transform-origin:0 0;">Axes Color Settings</div>
<div class="a" style="left:573px;top:73px;width:110px;height:291px;border:1px solid #7f8690;background:#ffffff;"></div>
<div class="a" style="left:612px;top:74px;width:1px;height:18px;background:#e6e6e6;"></div>
<div class="a" style="left:651px;top:74px;width:1px;height:18px;background:#e6e6e6;"></div>
<div class="t" style="left:586.00px;top:81.38px;font-size:9px;line-height:9px;color:#000;font-weight:400;transform:scaleX(0.9751);transform-origin:0 0;">Axe</div>
<div class="t" style="left:623.33px;top:81.38px;font-size:9px;line-height:9px;color:#000;font-weight:400;transform:scaleX(0.9259);transform-origin:0 0;">BGD</div>
<div class="a" style="left:652px;top:74px;width:30px;height:18px;overflow:hidden;"><div class="t" style="left:8.93px;top:7.38px;font-size:9px;line-height:9px;color:#000;font-weight:400;transform:scaleX(1.0536);transform-origin:0 0;">Color</div></div>
<div class="a" style="left:613px;top:93px;width:38px;height:15px;background:#000000;"></div>
<div class="a" style="left:652px;top:93px;width:30px;height:15px;background:#f0f000;"></div>
<div class="t" style="left:576.54px;top:95.03px;font-size:12.6px;line-height:12.6px;color:#000;font-weight:400;transform:scaleX(0.8573);transform-origin:0 0;">MSCO</div>
<div class="a" style="left:575px;top:109px;width:37px;height:15px;background:#f2f2f2;"></div>
<div class="a" style="left:613px;top:109px;width:38px;height:15px;background:#000000;"></div>
<div class="a" style="left:652px;top:109px;width:30px;height:15px;background:#e00000;"></div>
<div class="t" style="left:576.54px;top:111.03px;font-size:12.6px;line-height:12.6px;color:#000;font-weight:400;transform:scaleX(0.8573);transform-origin:0 0;">LEHM</div>
<div class="a" style="left:613px;top:125px;width:38px;height:15px;background:#000000;"></div>
<div class="a" style="left:652px;top:125px;width:30px;height:15px;background:#00dd00;"></div>
<div class="t" style="left:576.54px;top:127.03px;font-size:12.6px;line-height:12.6px;color:#000;font-weight:400;transform:scaleX(0.8573);transform-origin:0 0;">BRMS</div>
<div class="a" style="left:575px;top:141px;width:37px;height:15px;background:#f2f2f2;"></div>
<div class="a" style="left:613px;top:141px;width:38px;height:15px;background:#000000;"></div>
<div class="a" style="left:652px;top:141px;width:30px;height:15px;background:#ee82ee;"></div>
<div class="t" style="left:576.54px;top:143.03px;font-size:12.6px;line-height:12.6px;color:#000;font-weight:400;transform:scaleX(0.8573);transform-origin:0 0;">GETC</div>
<div class="a" style="left:613px;top:157px;width:38px;height:15px;background:#000000;"></div>
<div class="a" style="left:652px;top:157px;width:30px;height:15px;background:#00ffff;"></div>
<div class="t" style="left:576.37px;top:159.10px;font-size:12.4px;line-height:12.4px;color:#000;font-weight:700;transform:scaleX(1.0651);transform-origin:0 0;">TIMB</div>
<div class="a" style="left:575px;top:157px;width:37px;height:15px;border:1px dotted #000;"></div>
<div class="a" style="left:574px;top:347px;width:108px;height:16px;background:#f0f0f0;"></div>
<div class="a" style="left:591px;top:347px;width:69px;height:16px;background:#cdcdcd;"></div>
<svg class="a" style="left:577px;top:350px" width="10" height="11" viewBox="0 0 10 11"><path d="M7 1.5L3 5.5L7 9.5" stroke="#606060" stroke-width="2" fill="none"/></svg>
<svg class="a" style="left:668px;top:350px" width="10" height="11" viewBox="0 0 10 11"><path d="M3 1.5L7 5.5L3 9.5" stroke="#606060" stroke-width="2" fill="none"/></svg>
<div class="a" style="left:689px;top:73px;width:45px;height:290px;border:1px solid #dcdcdc;background:#ffffff;"></div>
<div class="a" style="left:700px;top:131px;width:23px;height:21px;border:1px solid #0078d7;background:#e1e1e1;border-width:2px;"></div>
<svg class="a" style="left:706px;top:136px" width="11" height="11" viewBox="0 0 11 11"><path d="M5.5 2V9M2 5.5H9" stroke="#000" stroke-width="1" fill="none"/></svg>
<div class="a" style="left:700px;top:207px;width:23px;height:21px;border:1px solid #adadad;background:#e1e1e1;"></div>
<div class="a" style="left:710px;top:218px;width:3px;height:1px;background:#000;"></div>
<div class="a" style="left:700px;top:283px;width:23px;height:21px;border:1px solid #adadad;background:#e1e1e1;"></div>
<div class="t" style="left:707.58px;top:289.27px;font-size:11.5px;line-height:11.5px;color:#000;font-weight:400;transform:scaleX(1.0688);transform-origin:0 0;">x</div>
<div class="a" style="left:53px;top:386px;width:291px;height:74px;border:1px solid #dcdcdc;"></div><div class="a" style="left:61px;top:386px;width:71px;height:1px;background:#ffffff;"></div><div class="t" style="left:61.00px;top:381.99px;font-size:11px;line-height:11px;color:#000;font-weight:400;transform:scaleX(1.0090);transform-origin:0 0;">Other Options</div>
<div class="t" style="left:63.29px;top:417.19px;font-size:11px;line-height:11px;color:#000;font-weight:400;transform:scaleX(0.9207);transform-origin:0 0;">Grid Line Color</div>
<div class="a" style="left:150px;top:411px;width:30px;height:18px;background:#d2691e;"></div><div class="a" style="left:180px;top:410px;width:1px;height:20px;background:#9aa0a6;"></div><div class="a" style="left:149px;top:429px;width:32px;height:1px;background:#9aa0a6;"></div>
<div class="t" style="left:207.93px;top:416.69px;font-size:11px;line-height:11px;color:#000;font-weight:400;transform:scaleX(0.9920);transform-origin:0 0;">Header</div>
<div class="t" style="left:182.94px;top:442.69px;font-size:11px;line-height:11px;color:#000;font-weight:400;transform:scaleX(0.9757);transform-origin:0 0;">Background</div>
<div class="t" style="left:266.68px;top:396.99px;font-size:11px;line-height:11px;color:#000;font-weight:400;transform:scaleX(0.9324);transform-origin:0 0;">Back</div>
<div class="t" style="left:307.25px;top:396.99px;font-size:11px;line-height:11px;color:#000;font-weight:400;transform:scaleX(1.1332);transform-origin:0 0;">Text</div>
<div class="a" style="left:264px;top:411px;width:30px;height:18px;background:#d3d3d3;"></div><div class="a" style="left:294px;top:410px;width:1px;height:20px;background:#9aa0a6;"></div><div class="a" style="left:263px;top:429px;width:32px;height:1px;background:#9aa0a6;"></div>
<div class="a" style="left:304px;top:411px;width:30px;height:18px;background:#000000;"></div><div class="a" style="left:334px;top:410px;width:1px;height:20px;background:#9aa0a6;"></div><div class="a" style="left:303px;top:429px;width:32px;height:1px;background:#9aa0a6;"></div>
<div class="a" style="left:264px;top:437px;width:30px;height:18px;background:#808080;"></div><div class="a" style="left:294px;top:436px;width:1px;height:20px;background:#9aa0a6;"></div><div class="a" style="left:263px;top:455px;width:32px;height:1px;background:#9aa0a6;"></div>
<div class="a" style="left:353px;top:386px;width:181px;height:74px;border:1px solid #dcdcdc;"></div><div class="a" style="left:361px;top:386px;width:67px;height:1px;background:#ffffff;"></div><div class="t" style="left:360.55px;top:382.49px;font-size:11px;line-height:11px;color:#000;font-weight:400;transform:scaleX(0.9712);transform-origin:0 0;">Level1 Colors</div>
<div class="t" style="left:436.68px;top:396.69px;font-size:11px;line-height:11px;color:#000;font-weight:400;transform:scaleX(0.9282);transform-origin:0 0;">Back</div>
<div class="t" style="left:477.35px;top:396.69px;font-size:11px;line-height:11px;color:#000;font-weight:400;transform:scaleX(1.1181);transform-origin:0 0;">Text</div>
<div class="t" style="left:361.62px;top:416.69px;font-size:11px;line-height:11px;color:#000;font-weight:400;transform:scaleX(0.9426);transform-origin:0 0;">Up Tick</div>
<div class="t" style="left:361.54px;top:442.69px;font-size:11px;line-height:11px;color:#000;font-weight:400;transform:scaleX(0.9753);transform-origin:0 0;">Down Tick</div>
<div class="a" style="left:434px;top:411px;width:30px;height:18px;background:#008000;"></div><div class="a" style="left:464px;top:410px;width:1px;height:20px;background:#9aa0a6;"></div><div class="a" style="left:433px;top:429px;width:32px;height:1px;background:#9aa0a6;"></div>
<div class="a" style="left:474px;top:411px;width:30px;height:18px;background:#000000;"></div><div class="a" style="left:504px;top:410px;width:1px;height:20px;background:#9aa0a6;"></div><div class="a" style="left:473px;top:429px;width:32px;height:1px;background:#9aa0a6;"></div>
<div class="a" style="left:434px;top:437px;width:30px;height:18px;background:#ff0000;"></div><div class="a" style="left:464px;top:436px;width:1px;height:20px;background:#9aa0a6;"></div><div class="a" style="left:433px;top:455px;width:32px;height:1px;background:#9aa0a6;"></div>
<div class="a" style="left:474px;top:437px;width:30px;height:18px;background:#000000;"></div><div class="a" style="left:504px;top:436px;width:1px;height:20px;background:#9aa0a6;"></div><div class="a" style="left:473px;top:455px;width:32px;height:1px;background:#9aa0a6;"></div>
<div class="a" style="left:543px;top:386px;width:201px;height:74px;border:1px solid #dcdcdc;"></div><div class="a" style="left:551px;top:386px;width:89px;height:1px;background:#ffffff;"></div><div class="t" style="left:551.12px;top:382.49px;font-size:11px;line-height:11px;color:#000;font-weight:400;transform:scaleX(0.9766);transform-origin:0 0;">Order Highlighting</div>
<div class="a" style="left:553px;top:404px;width:13px;height:13px;border:1px solid #333333;background:#ffffff;"></div>
<div class="t" style="left:569.13px;top:406.49px;font-size:11px;line-height:11px;color:#000;font-weight:400;transform:scaleX(0.9909);transform-origin:0 0;">Highlight Accepted Orders</div>
<div class="t" style="left:626.46px;top:422.19px;font-size:11px;line-height:11px;color:#000;font-weight:400;transform:scaleX(0.9494);transform-origin:0 0;">Back</div>
<div class="t" style="left:667.96px;top:422.19px;font-size:11px;line-height:11px;color:#000;font-weight:400;transform:scaleX(1.0980);transform-origin:0 0;">Text</div>
<div class="t" style="left:552.12px;top:443.29px;font-size:11px;line-height:11px;color:#000;font-weight:400;transform:scaleX(0.9725);transform-origin:0 0;">Order Color</div>
<div class="a" style="left:624px;top:437px;width:30px;height:18px;background:#000000;"></div><div class="a" style="left:654px;top:436px;width:1px;height:20px;background:#9aa0a6;"></div><div class="a" style="left:623px;top:455px;width:32px;height:1px;background:#9aa0a6;"></div>
<div class="a" style="left:664px;top:437px;width:30px;height:18px;background:#ffffff;"></div><div class="a" style="left:694px;top:436px;width:1px;height:20px;background:#9aa0a6;"></div><div class="a" style="left:663px;top:455px;width:32px;height:1px;background:#9aa0a6;"></div>
<div class="a" style="left:31px;top:481px;width:731px;height:70px;border:1px solid #dcdcdc;"></div>
<div class="a" style="left:372px;top:492px;width:114px;height:21px;border:1px solid #adadad;background:#e1e1e1;"></div>
<div class="t" style="left:396.92px;top:497.69px;font-size:11px;line-height:11px;color:#000;font-weight:400;transform:scaleX(1.0043);transform-origin:0 0;">Load Default</div>
<div class="a" style="left:500px;top:492px;width:113px;height:21px;border:1px solid #adadad;background:#e1e1e1;"></div>
<div class="t" style="left:516.91px;top:498.49px;font-size:11px;line-height:11px;color:#000;font-weight:400;transform:scaleX(0.9928);transform-origin:0 0;">Save as Default</div>
<div class="a" style="left:627px;top:492px;width:114px;height:21px;border:1px solid #adadad;background:#e1e1e1;"></div>
<div class="t" style="left:669.60px;top:498.19px;font-size:11px;line-height:11px;color:#000;font-weight:400;transform:scaleX(0.9745);transform-origin:0 0;">Apply</div>
<div class="a" style="left:499px;top:526px;width:115px;height:23px;border:1px solid #f01010;background:#e1e1e1;box-shadow:inset 0 0 0 1px #b9c4c9;"></div>
<div class="t" style="left:547.94px;top:533.39px;font-size:11px;line-height:11px;color:#000;font-weight:400;transform:scaleX(0.9222);transform-origin:0 0;">OK</div>
<div class="a" style="left:627px;top:527px;width:114px;height:21px;border:1px solid #adadad;background:#e1e1e1;"></div>
<div class="t" style="left:666.97px;top:533.29px;font-size:11px;line-height:11px;color:#000;font-weight:400;transform:scaleX(0.9561);transform-origin:0 0;">Cancel</div>
</body></html>
